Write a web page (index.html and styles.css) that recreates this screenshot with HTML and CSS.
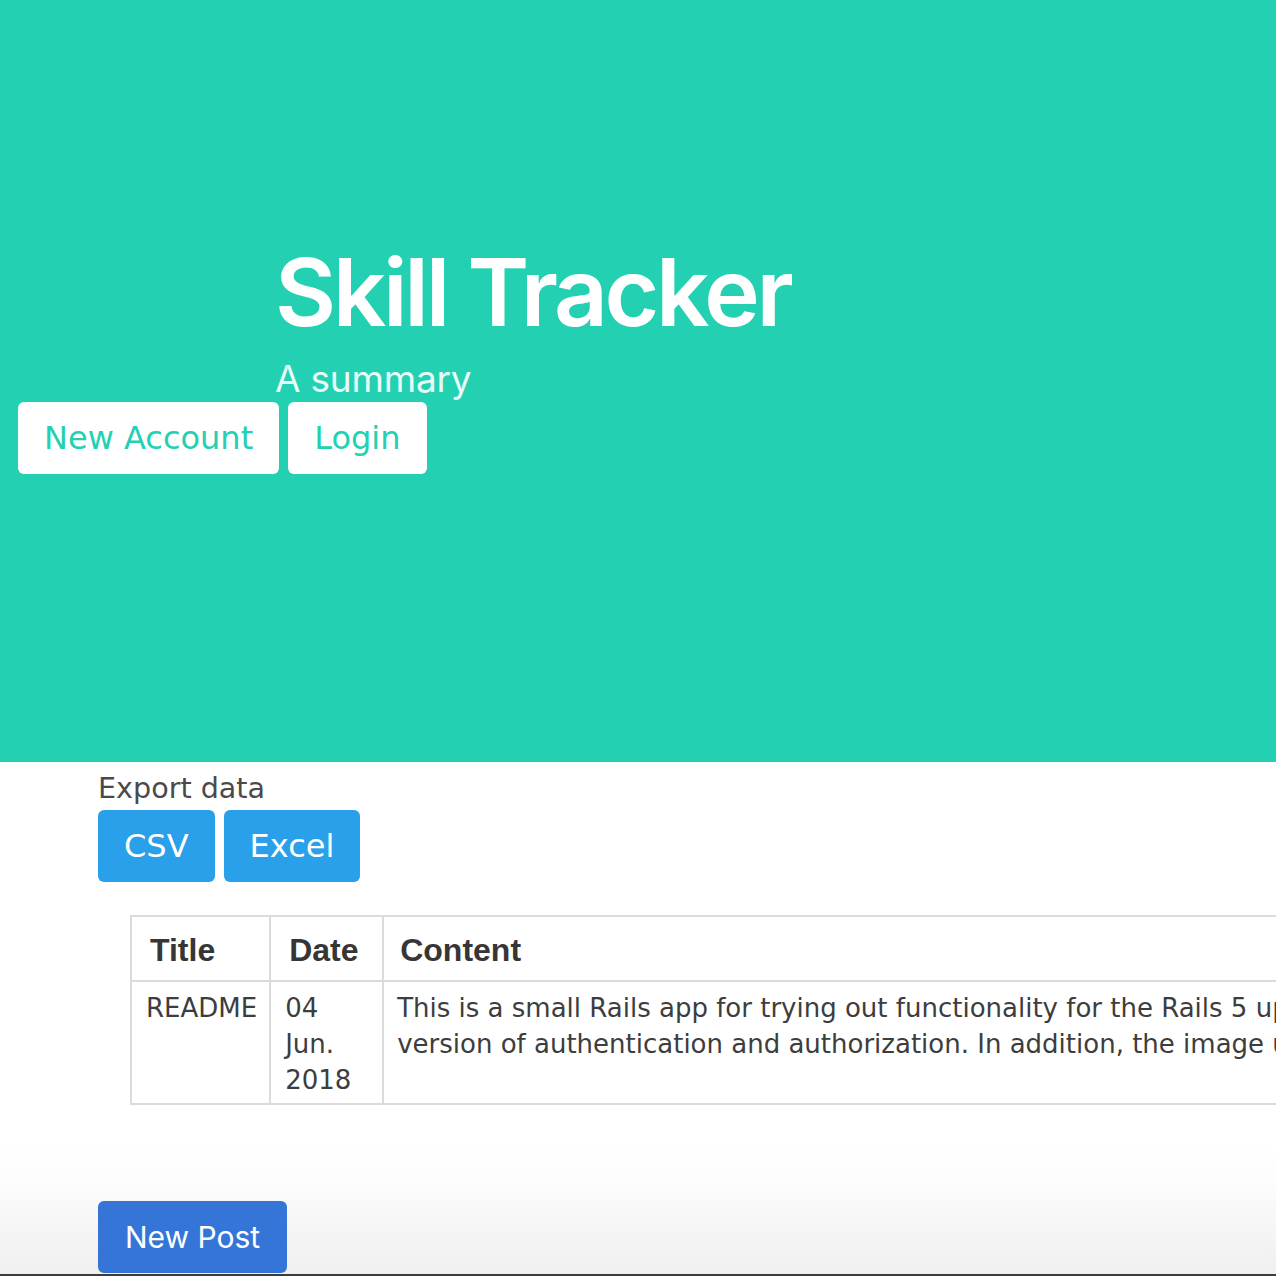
FILE: index.html
```html
<!DOCTYPE html>
<html lang="en">
<head>
<meta charset="utf-8">
<title>Skill Tracker</title>
<link rel="stylesheet" href="styles.css">
</head>
<body>
<section class="hero">
  <div class="hero-body">
    <h1 class="title">Skill Tracker</h1>
    <h2 class="subtitle">A summary</h2>
  </div>
  <div class="hero-buttons">
    <a class="btn btn-white">New Account</a>
    <a class="btn btn-white">Login</a>
  </div>
</section>
<main class="main">
  <p class="export-label">Export data</p>
  <div class="export-buttons">
    <a class="btn btn-info">CSV</a>
    <a class="btn btn-info">Excel</a>
  </div>
  <table class="posts">
    <thead>
      <tr>
        <th>Title</th>
        <th>Date</th>
        <th class="col-content">Content</th>
      </tr>
    </thead>
    <tbody>
      <tr>
        <td>README</td>
        <td><div class="date-text">04 Jun. 2018</div></td>
        <td class="col-content">This is a small Rails app for trying out functionality for the Rails 5 updated<br>version of authentication and authorization. In addition, the image upload</td>
      </tr>
    </tbody>
  </table>
</main>
<footer class="actions">
  <a class="btn btn-link">New Post</a>
</footer>
</body>
</html>
```
FILE: styles.css
```css
html, body {
  margin: 0;
  padding: 0;
  overflow: hidden;
  background: #ffffff;
}
body {
  width: 1276px;
  height: 1276px;
  font-family: "DejaVu Sans", Verdana, sans-serif;
}
.hero {
  background: #23d1b2;
  height: 762px;
  padding-top: 245px;
  box-sizing: border-box;
}
.hero-body {
  padding-left: 275px;
}
.title {
  margin: 0;
  font-family: Inter, "Noto Sans", sans-serif;
  font-weight: 600;
  font-size: 94px;
  line-height: 94px;
  letter-spacing: -3.3px;
  color: #ffffff;
}
.subtitle {
  margin: 21px 0 0 0;
  font-family: Inter, "Noto Sans", sans-serif;
  font-weight: 400;
  font-size: 37px;
  line-height: 37px;
  letter-spacing: -0.2px;
  color: #e8fbf7;
}
.hero-buttons {
  display: flex;
  gap: 9px;
  margin-top: 5px;
  padding-left: 18px;
}
.btn {
  display: inline-block;
  height: 72px;
  line-height: 72px;
  padding: 0 26px;
  border-radius: 6px;
  font-family: "DejaVu Sans", Verdana, sans-serif;
  font-size: 32px;
  white-space: nowrap;
  text-decoration: none;
  box-sizing: border-box;
}
.btn-white {
  background: #ffffff;
  color: #23d1b2;
}
.btn-info {
  background: #2a9fea;
  color: #ffffff;
}
.btn-link {
  background: #3675d8;
  color: #ffffff;
  font-family: Inter, "Noto Sans", sans-serif;
  font-size: 30px;
  padding: 0 27px;
}
.main {
  padding: 12px 0 0 98px;
  height: 378px;
  box-sizing: border-box;
}
.export-label {
  margin: 0;
  font-size: 28.6px;
  line-height: 28px;
  color: #4a4a4a;
}
.export-buttons {
  display: flex;
  gap: 9px;
  margin-top: 8px;
}
.posts {
  margin: 33px 0 0 32px;
  border-collapse: collapse;
  border: 2px solid #dbdbdb;
  color: #3d3d3d;
}
.posts th, .posts td {
  border: 2px solid #dbdbdb;
  text-align: left;
  vertical-align: top;
}
.posts th {
  font-family: "Liberation Sans", Arial, sans-serif;
  font-weight: 700;
  font-size: 32px;
  line-height: 36px;
  color: #363636;
  padding: 15px 17px 12px 18px;
}
.posts td {
  font-size: 26px;
  line-height: 36px;
  padding: 8px 12px 5px 14px;
}
.date-text {
  width: 85px;
}
.posts .col-content {
  white-space: nowrap;
  padding-left: 13px;
}
.posts th.col-content {
  padding-left: 16px;
}
.actions {
  height: 136px;
  padding: 61px 0 0 98px;
  box-sizing: border-box;
  background: linear-gradient(#ffffff 0%, #fdfdfd 30%, #efefef 100%);
  border-bottom: 2px solid #3c3c3c;
}
```
